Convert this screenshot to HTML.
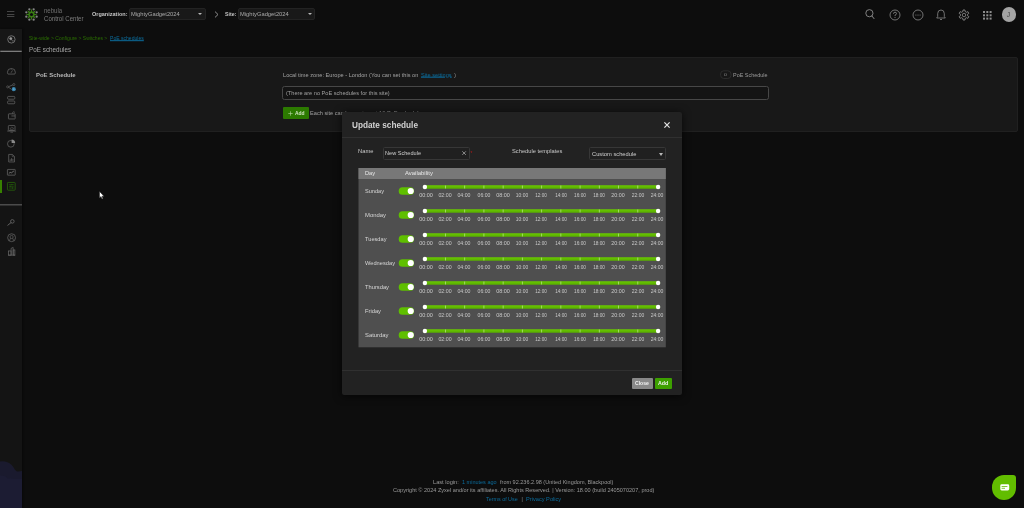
<!DOCTYPE html>
<html>
<head>
<meta charset="utf-8">
<title>Nebula Control Center - PoE schedules</title>
<style>
*{box-sizing:border-box;margin:0;padding:0}
html,body{width:1024px;height:508px;overflow:hidden;background:#0d0d0d;font-family:"Liberation Sans",sans-serif;color:#bdbdbd}
#wrap{position:absolute;left:-8px;top:-8px;width:1040px;height:524px;padding:0;background:#0d0d0d;filter:blur(0.4px)}
#wrap>*{margin-left:8px;margin-top:8px}
.a{position:absolute;white-space:nowrap}
svg{position:absolute;overflow:visible}
#sidebar{left:0;top:29px;width:22px;height:479px;background:#141414;box-shadow:1px 0 2px rgba(0,0,0,.4)}
#panel{left:29px;top:57px;width:989px;height:75px;background:#181818;border:1px solid #202020;border-radius:2px}
#modal{left:342px;top:112px;width:340px;height:283px;background:#222222;border-radius:2px;box-shadow:0 1px 8px rgba(0,0,0,.7)}
.sel{background:#191919;border:1px solid #232323;border-radius:2px}
.tri{width:0;height:0;border-left:2.2px solid transparent;border-right:2.2px solid transparent;border-top:2.6px solid #b8b8b8}
.tog{width:15px;height:7.6px;border-radius:3.8px;background:#5fbf00}
.tog i{position:absolute;right:0.7px;top:0.7px;width:6.2px;height:6.2px;border-radius:3.1px;background:#fff}
.trk{height:3px;border-radius:1.5px;background:#62c000}
.hd{width:5px;height:5px;border-radius:50%;background:#fff}
.tk{width:1px;height:3px;background:#a5da66}
</style>
</head>
<body>
<div id="wrap">
<svg width="0" height="0" style="left:0;top:0"><defs><linearGradient id="tg" x1="0" y1="0" x2="0" y2="1"><stop offset="0" stop-color="#69c900"/><stop offset="1" stop-color="#59ad00"/></linearGradient></defs></svg>
<!-- topbar -->
<svg style="left:7.4px;top:10.8px" width="7.4" height="1" viewBox="0 0 7.4 1"><rect width="7.4" height="0.8" y="0.1" fill="#555"/></svg>
<svg style="left:7.4px;top:13.5px" width="7.4" height="1" viewBox="0 0 7.4 1"><rect width="7.4" height="0.8" y="0.1" fill="#555"/></svg>
<svg style="left:7.4px;top:16.2px" width="7.4" height="1" viewBox="0 0 7.4 1"><rect width="7.4" height="0.8" y="0.1" fill="#555"/></svg>
<svg style="left:23.6px;top:7px" width="15" height="15" viewBox="-7.5 -7.5 15 15"><circle cx="5.17" cy="2.14" r="1.15" fill="#858585"/><circle cx="2.14" cy="5.17" r="1.15" fill="#858585"/><circle cx="-2.14" cy="5.17" r="1.15" fill="#858585"/><circle cx="-5.17" cy="2.14" r="1.15" fill="#858585"/><circle cx="-5.17" cy="-2.14" r="1.15" fill="#858585"/><circle cx="-2.14" cy="-5.17" r="1.15" fill="#858585"/><circle cx="2.14" cy="-5.17" r="1.15" fill="#858585"/><circle cx="5.17" cy="-2.14" r="1.15" fill="#858585"/><polygon points="6.10,0.00 2.59,1.07 4.31,4.31 1.07,2.59 0.00,6.10 -1.07,2.59 -4.31,4.31 -2.59,1.07 -6.10,0.00 -2.59,-1.07 -4.31,-4.31 -1.07,-2.59 -0.00,-6.10 1.07,-2.59 4.31,-4.31 2.59,-1.07" fill="#3a7d14"/><circle cx="0" cy="0" r="1.6" fill="#0d0d0d"/></svg>
<div class="a " style="left:44px;top:6.00px;font-size:6.6px;line-height:7.92px;color:#6f6f6f;font-weight:normal;transform:translateY(0.54px) scaleX(0.919);transform-origin:0 50%;">nebula</div>
<div class="a " style="left:44px;top:14.00px;font-size:6.4px;line-height:7.68px;color:#7d7d7d;font-weight:normal;transform:translateY(0.66px) scaleX(0.950);transform-origin:0 50%;">Control Center</div>
<div class="a " style="left:91.5px;top:10.00px;font-size:5.4px;line-height:6.48px;color:#c4c4c4;font-weight:bold;transform:translateY(0.96px) scaleX(1.022);transform-origin:0 50%;">Organization:</div>
<div class="a sel" style="left:129px;top:8px;width:77px;height:12.3px"></div>
<div class="a " style="left:131px;top:11.00px;font-size:5.2px;line-height:6.24px;color:#aaaaaa;font-weight:normal;transform:translateY(0.08px) scaleX(1.111);transform-origin:0 50%;">MightyGadget2024</div>
<div class="a tri" style="left:198px;top:13.2px"></div>
<svg style="left:213.5px;top:11px" width="5" height="7" viewBox="0 0 5 7"><path d="M1 0.6 L4 3.5 L1 6.4" fill="none" stroke="#9a9a9a" stroke-width="0.9"/></svg>
<div class="a " style="left:225.1px;top:10.00px;font-size:5.4px;line-height:6.48px;color:#c4c4c4;font-weight:bold;transform:translateY(0.96px) scaleX(0.967);transform-origin:0 50%;">Site:</div>
<div class="a sel" style="left:238px;top:8px;width:77.3px;height:12.3px"></div>
<div class="a " style="left:240.3px;top:11.00px;font-size:5.2px;line-height:6.24px;color:#aaaaaa;font-weight:normal;transform:translateY(0.08px) scaleX(1.111);transform-origin:0 50%;">MightyGadget2024</div>
<div class="a tri" style="left:308px;top:13.2px"></div>
<svg style="left:864px;top:8px" width="12" height="12" viewBox="0 0 12 12"><circle cx="5.4" cy="5.2" r="3.6" fill="none" stroke="#8c8c8c" stroke-width="0.9"/><path d="M7.9 8 L10 10.6" stroke="#8c8c8c" stroke-width="1" stroke-linecap="round"/></svg>
<svg style="left:888.6px;top:8.8px" width="12" height="12" viewBox="0 0 12 12"><circle cx="6" cy="6" r="5" fill="none" stroke="#8c8c8c" stroke-width="0.8"/><path d="M4.5 4.8 Q4.5 3.2 6 3.2 Q7.5 3.2 7.5 4.6 Q7.5 5.6 6 6.2 L6 7.1" fill="none" stroke="#8c8c8c" stroke-width="0.8"/><circle cx="6" cy="8.5" r="0.5" fill="#8c8c8c"/></svg>
<svg style="left:911.8px;top:8.8px" width="12" height="12" viewBox="0 0 12 12"><circle cx="6" cy="6" r="5" fill="none" stroke="#8c8c8c" stroke-width="0.8"/><circle cx="3.9" cy="6" r="0.55" fill="#8c8c8c"/><circle cx="6" cy="6" r="0.55" fill="#8c8c8c"/><circle cx="8.1" cy="6" r="0.55" fill="#8c8c8c"/></svg>
<svg style="left:934.9px;top:8.9px" width="12" height="12" viewBox="0 0 12 12"><path d="M1.7 9 L2.7 7.5 L2.7 4.6 Q2.7 1 6 1 Q9.3 1 9.3 4.6 L9.3 7.5 L10.3 9 Z" fill="none" stroke="#8c8c8c" stroke-width="0.8" stroke-linejoin="round"/><path d="M5 10.2 Q6 11.4 7 10.2" fill="none" stroke="#8c8c8c" stroke-width="0.8"/></svg>
<svg style="left:958.2px;top:8.9px" width="12" height="12" viewBox="-6 -6 12 12"><polygon points="-1.08,-3.54 -0.97,-5.01 0.97,-5.01 1.08,-3.54 2.52,-2.71 3.85,-3.35 4.82,-1.66 3.61,-0.83 3.61,0.83 4.82,1.66 3.85,3.35 2.52,2.71 1.08,3.54 0.97,5.01 -0.97,5.01 -1.08,3.54 -2.52,2.71 -3.85,3.35 -4.82,1.66 -3.61,0.83 -3.61,-0.83 -4.82,-1.66 -3.85,-3.35 -2.52,-2.71" fill="none" stroke="#8c8c8c" stroke-width="0.85" stroke-linejoin="round"/><circle r="1.75" fill="none" stroke="#8c8c8c" stroke-width="0.8"/></svg>
<svg style="left:982.8px;top:10.7px" width="9" height="9" viewBox="0 0 9 9"><rect x="0.0" y="0.0" width="2" height="2" fill="#8c8c8c"/><rect x="3.3" y="0.0" width="2" height="2" fill="#8c8c8c"/><rect x="6.6" y="0.0" width="2" height="2" fill="#8c8c8c"/><rect x="0.0" y="3.3" width="2" height="2" fill="#8c8c8c"/><rect x="3.3" y="3.3" width="2" height="2" fill="#8c8c8c"/><rect x="6.6" y="3.3" width="2" height="2" fill="#8c8c8c"/><rect x="0.0" y="6.6" width="2" height="2" fill="#8c8c8c"/><rect x="3.3" y="6.6" width="2" height="2" fill="#8c8c8c"/><rect x="6.6" y="6.6" width="2" height="2" fill="#8c8c8c"/></svg>
<div class="a" style="left:1001.6px;top:7.4px;width:14px;height:14.2px;border-radius:50%;background:#a4a4a4"></div>
<div class="a" style="left:1001.5px;top:7.5px;width:14px;height:14px;line-height:14.2px;text-align:center;font-size:6.6px;color:#444">J</div>
<!-- sidebar -->
<div class="a" id="sidebar"></div>
<div class="a" style="left:0;top:29px;width:22px;height:22px;background:#171717"></div>
<svg style="left:6.70px;top:35.10px" width="8.8" height="8.8" viewBox="0 0 10 10"><circle cx="5" cy="5" r="4.2" fill="none" stroke="#828282" stroke-width="0.9"/><circle cx="4.3" cy="4.1" r="1.35" fill="#9a9a9a" stroke="#a8a8a8" stroke-width="0.5"/><path d="M5.2 5.2 L6.7 7.2 L7.6 6.2" fill="none" stroke="#8a8a8a" stroke-width="0.7"/></svg>
<svg style="left:0;top:50px" width="22" height="3" viewBox="0 0 22 3"><rect x="0.3" y="0.7" width="21.4" height="1.3" fill="#7c7c7c"/></svg>
<svg style="left:7.05px;top:68.30px" width="8.8" height="6.6" viewBox="0 0 10 7.5"><path d="M1.1 6.9 Q0.5 5.8 0.5 4.8 Q0.5 0.6 5 0.6 Q9.5 0.6 9.5 4.8 Q9.5 5.8 8.9 6.9 Z" fill="none" stroke="#686868" stroke-width="0.85" stroke-linejoin="round"/><path d="M4.6 5.4 L6.2 2.8 M5 0.8 L5 1.8" stroke="#686868" stroke-width="0.8"/></svg>
<svg style="left:6.40px;top:83.40px" width="9.6" height="8.8" viewBox="0 0 11 10"><path d="M2.4 4.4 L8.6 1.8 M2.6 4.6 L6 7" stroke="#686868" stroke-width="0.8"/><circle cx="1.9" cy="4.4" r="1.2" fill="#151515" stroke="#686868" stroke-width="0.7"/><circle cx="9" cy="1.7" r="1.2" fill="#151515" stroke="#686868" stroke-width="0.7"/><circle cx="8.9" cy="7.0" r="2.35" fill="#3b82aa"/><circle cx="8.9" cy="7.0" r="0.9" fill="#5aa6d0"/></svg>
<svg style="left:7.25px;top:96.40px" width="8.4" height="8.2" viewBox="0 0 10 10"><rect x="0.6" y="0.5" width="8.8" height="3.4" rx="1.1" fill="none" stroke="#686868" stroke-width="0.9"/><rect x="0.6" y="6.1" width="8.8" height="3.4" rx="1.1" fill="none" stroke="#686868" stroke-width="0.9"/></svg>
<svg style="left:7.55px;top:110.70px" width="7.6" height="8.4" viewBox="0 0 9 10"><rect x="0.5" y="3.4" width="8" height="6.1" rx="0.5" fill="none" stroke="#686868" stroke-width="0.9"/><path d="M4 5.9 L8.4 5.9" stroke="#686868" stroke-width="0.9"/><path d="M5.6 3.4 L5.6 1.6 Q7 -0.2 8.2 1.8" fill="none" stroke="#686868" stroke-width="0.8"/></svg>
<svg style="left:6.55px;top:125.30px" width="9.4" height="7.8" viewBox="0 0 11 9"><rect x="1.6" y="0.5" width="7.8" height="5.8" rx="0.9" fill="none" stroke="#686868" stroke-width="0.85"/><path d="M0.3 7 L10.7 7" stroke="#686868" stroke-width="0.9"/><path d="M3.8 5 Q3.2 3.8 4.4 3.4 Q5 2.2 6.3 2.9 Q7.6 2.9 7.4 4.1 Q7.8 5 6.9 5 Z" fill="none" stroke="#686868" stroke-width="0.6"/><path d="M4 8.4 L7 8.4" stroke="#686868" stroke-width="0.7"/></svg>
<svg style="left:7.00px;top:139.10px" width="8.4" height="8.6" viewBox="0 0 10 10.2"><circle cx="4.6" cy="5.7" r="4" fill="none" stroke="#686868" stroke-width="0.85"/><path d="M5.5 0.6 A4.2 4.2 0 0 1 9.7 4.8 L5.5 4.8 Z" fill="#8a8a8a"/></svg>
<svg style="left:7.70px;top:153.80px" width="7.2" height="8.4" viewBox="0 0 8.5 10"><path d="M0.8 0.5 L5.2 0.5 L7.7 3 L7.7 9.5 L0.8 9.5 Z" fill="none" stroke="#686868" stroke-width="0.85" stroke-linejoin="round"/><path d="M5 0.7 L5 3.2 L7.5 3.2" fill="none" stroke="#686868" stroke-width="0.6"/><path d="M2.6 8.2 L2.6 6.4 M4.2 8.2 L4.2 5 M5.8 8.2 L5.8 5.8" stroke="#686868" stroke-width="0.9"/></svg>
<svg style="left:7.05px;top:169.30px" width="8.6" height="6.6" viewBox="0 0 10.5 8"><rect x="0.5" y="0.5" width="9.5" height="7" rx="0.4" fill="none" stroke="#686868" stroke-width="0.9"/><path d="M2.2 5.6 L3.8 4 L5.2 4.8 L8.4 2.4" fill="none" stroke="#9a9a9a" stroke-width="0.8"/></svg>
<div class="a" style="left:0;top:180.1px;width:1.9px;height:13.1px;background:#378200"></div>
<svg style="left:7.05px;top:182.20px" width="8.6" height="8.6" viewBox="0 0 10 10"><rect x="0.5" y="0.5" width="9" height="9" rx="0.8" fill="none" stroke="#27650a" stroke-width="0.95"/><path d="M2.2 3 L7.8 3 M2.2 5 L7.8 5 M2.2 7 L7.8 7" stroke="#27650a" stroke-width="0.7"/><path d="M5.6 2.2 L5.6 3.8 M3.8 4.2 L3.8 5.8 M6.4 6.2 L6.4 7.8" stroke="#27650a" stroke-width="0.8"/></svg>
<svg style="left:0;top:203px" width="22" height="3" viewBox="0 0 22 3"><rect x="0" y="1.2" width="22" height="1.2" fill="#5a5a5a"/></svg>
<svg style="left:7.40px;top:219.40px" width="7.8" height="6.8" viewBox="0 0 9 8"><circle cx="6.2" cy="2.8" r="2.1" fill="none" stroke="#686868" stroke-width="0.95"/><path d="M4.6 4.3 L0.9 7.3" stroke="#686868" stroke-width="1.1" stroke-linecap="round"/></svg>
<svg style="left:6.80px;top:232.70px" width="9.2" height="9.4" viewBox="0 0 10 10.2"><circle cx="5" cy="5.1" r="4.3" fill="none" stroke="#686868" stroke-width="0.8"/><circle cx="5" cy="4.3" r="1.7" fill="none" stroke="#686868" stroke-width="0.7"/><path d="M3.9 5.6 L2.6 8.4 M6.1 5.6 L7.4 8.4" stroke="#686868" stroke-width="0.7"/></svg>
<svg style="left:7.50px;top:247.20px" width="7.4" height="8.6" viewBox="0 0 8.6 10"><path d="M3.6 9.5 L3.6 1.6 L6 0.5 L6 9.5" fill="none" stroke="#686868" stroke-width="0.85"/><rect x="0.6" y="4.6" width="3" height="4.9" fill="none" stroke="#686868" stroke-width="0.85"/><rect x="6" y="3.4" width="2" height="6.1" fill="none" stroke="#686868" stroke-width="0.85"/><path d="M0.3 9.5 L8.3 9.5" stroke="#686868" stroke-width="0.8"/></svg>
<svg style="left:0;top:458px" width="22" height="50" viewBox="0 0 22 50"><path d="M0 3.6 Q9 2 14 10 Q15.6 13.6 18 13.4 L22 13 L22 50 L0 50 Z" fill="#1a1a2e"/><path d="M0 17.5 Q5 17 8 20.5 Q12 20 14 21 L22 21 L22 50 L0 50 Z" fill="#1c1c33"/></svg>
<!-- main -->
<div class="a " style="left:29px;top:36.00px;font-size:4.7px;line-height:5.64px;color:#2a6e00;font-weight:normal;transform:translateY(0.18px) scaleX(1.071);transform-origin:0 50%;">Site-wide &gt; Configure &gt; Switches &gt;</div>
<div class="a " style="left:110px;top:36.00px;font-size:4.7px;line-height:5.64px;color:#0b6c9c;font-weight:normal;text-decoration:underline;text-decoration-thickness:0.5px;text-underline-offset:0.4px;transform:translateY(0.18px) scaleX(1.081);transform-origin:0 50%;">PoE schedules</div>
<div class="a " style="left:29px;top:45.00px;font-size:6.4px;line-height:7.68px;color:#a6a6a6;font-weight:normal;transform:translateY(0.86px) scaleX(0.990);transform-origin:0 50%;">PoE schedules</div>
<div class="a" id="panel"></div>
<div class="a " style="left:35.7px;top:71.00px;font-size:5.7px;line-height:6.84px;color:#b8b8b8;font-weight:bold;transform:translateY(0.78px) scaleX(1.046);transform-origin:0 50%;">PoE Schedule</div>
<div class="a " style="left:282.8px;top:72.00px;font-size:4.7px;line-height:5.64px;color:#a4a4a4;font-weight:normal;transform:translateY(0.68px) scaleX(1.201);transform-origin:0 50%;">Local time zone: Europe - London (You can set this on</div>
<div class="a " style="left:421px;top:72.00px;font-size:4.7px;line-height:5.64px;color:#0b6c9c;font-weight:normal;text-decoration:underline;text-decoration-thickness:0.5px;text-underline-offset:0.4px;transform:translateY(0.68px) scaleX(1.202);transform-origin:0 50%;">Site settings</div>
<div class="a " style="left:454.3px;top:72.00px;font-size:4.7px;line-height:5.64px;color:#a4a4a4;font-weight:normal;transform:translateY(0.68px) scaleX(1.000);transform-origin:0 50%;">)</div>
<div class="a" style="left:282px;top:86px;width:486.6px;height:14px;border:1px solid #474747;border-radius:2.5px;background:#141414"></div>
<div class="a " style="left:285.7px;top:90.00px;font-size:4.7px;line-height:5.64px;color:#a0a0a0;font-weight:normal;transform:translateY(0.58px) scaleX(1.198);transform-origin:0 50%;">(There are no PoE schedules for this site)</div>
<div class="a" style="left:282.7px;top:107px;width:26px;height:12px;background:#2c7a00;border-radius:1px"></div>
<svg style="left:287.5px;top:110.5px" width="5" height="5" viewBox="0 0 5 5"><path d="M2.5 0.3 L2.5 4.7 M0.3 2.5 L4.7 2.5" stroke="#b9d6a4" stroke-width="0.6"/></svg>
<div class="a " style="left:295.2px;top:110.00px;font-size:5px;line-height:6.00px;color:#cfe3c0;font-weight:bold;transform:translateY(0.10px) scaleX(0.986);transform-origin:0 50%;">Add</div>
<div class="a " style="left:310.2px;top:111.00px;font-size:4.7px;line-height:5.64px;color:#a0a0a0;font-weight:normal;transform:translateY(0.18px) scaleX(1.200);transform-origin:0 50%;">Each site can have at most 10 PoE schedules</div>
<svg style="left:719px;top:69px" width="14" height="11" viewBox="719 69 14 11"><rect x="720.6" y="70.8" width="10.4" height="7.7" rx="3.2" fill="#171717" stroke="#2c2c2c" stroke-width="1"/></svg>
<div class="a " style="left:724.4px;top:72.00px;font-size:4.4px;line-height:5.28px;color:#8c8c8c;font-weight:normal;transform:translateY(0.26px) scaleX(1.150);transform-origin:0 50%;">0</div>
<div class="a " style="left:733.3px;top:72.00px;font-size:4.7px;line-height:5.64px;color:#9a9a9a;font-weight:normal;transform:translateY(0.98px) scaleX(1.161);transform-origin:0 50%;">PoE Schedule</div>
<svg style="left:98.5px;top:191px" width="6" height="9" viewBox="0 0 6 9"><path d="M0.5 0.4 L0.5 7 L2 5.6 L3 8 L4 7.6 L3 5.2 L5 5.2 Z" fill="#fff" stroke="#222" stroke-width="0.5"/></svg>
<!-- modal -->
<div class="a" id="modal"></div>
<div class="a " style="left:351.8px;top:120.00px;font-size:8.2px;line-height:9.84px;color:#d2d2d2;font-weight:bold;transform:translateY(0.88px) scaleX(1.007);transform-origin:0 50%;">Update schedule</div>
<svg style="left:664.3px;top:121.8px" width="6" height="6" viewBox="0 0 6 6"><path d="M0.4 0.4 L5.6 5.6 M5.6 0.4 L0.4 5.6" stroke="#e6e6e6" stroke-width="1.2"/></svg>
<div class="a" style="left:342px;top:137px;width:340px;height:1px;background:#303030"></div>
<div class="a" style="left:342px;top:370px;width:340px;height:1px;background:#303030"></div>
<div class="a " style="left:358.2px;top:148.00px;font-size:5.1px;line-height:6.12px;color:#cacaca;font-weight:normal;transform:translateY(0.24px) scaleX(1.133);transform-origin:0 50%;">Name</div>
<div class="a" style="left:383.3px;top:147.3px;width:86.6px;height:12.3px;border:1px solid #373737;border-radius:1.5px;background:#202020"></div>
<div class="a " style="left:385px;top:150.00px;font-size:5px;line-height:6.00px;color:#d0d0d0;font-weight:normal;transform:translateY(0.40px) scaleX(1.116);transform-origin:0 50%;">New Schedule</div>
<svg style="left:462px;top:151.4px" width="4.2" height="4.2" viewBox="0 0 4 4"><path d="M0.3 0.3 L3.7 3.7 M3.7 0.3 L0.3 3.7" stroke="#c8c8c8" stroke-width="0.6"/></svg>
<div class="a " style="left:470.6px;top:150.00px;font-size:4.5px;line-height:5.40px;color:#c01818;font-weight:normal;transform:translateY(0.50px) scaleX(1.000);transform-origin:0 50%;">*</div>
<div class="a " style="left:512px;top:148.00px;font-size:5.1px;line-height:6.12px;color:#cacaca;font-weight:normal;transform:translateY(0.24px) scaleX(1.126);transform-origin:0 50%;">Schedule templates</div>
<div class="a" style="left:589px;top:147.3px;width:77px;height:12.3px;border:1px solid #373737;border-radius:1.5px;background:#202020"></div>
<div class="a " style="left:592.3px;top:150.00px;font-size:5px;line-height:6.00px;color:#d0d0d0;font-weight:normal;transform:translateY(0.70px) scaleX(1.149);transform-origin:0 50%;">Custom schedule</div>
<div class="a tri" style="left:659.3px;top:152.5px;border-left-width:2.5px;border-right-width:2.5px;border-top-width:3px"></div>
<svg style="left:358px;top:168px" width="309" height="180" viewBox="358 168 309 180"><rect x="358.5" y="168" width="307.3" height="179.3" fill="#4f4f4f"/><rect x="358.5" y="168" width="307.3" height="11" fill="#787878"/></svg>
<div class="a " style="left:365px;top:171.00px;font-size:4.9px;line-height:5.88px;color:#e8e8e8;font-weight:normal;transform:translateY(0.36px) scaleX(1.161);transform-origin:0 50%;">Day</div>
<div class="a " style="left:405.3px;top:171.00px;font-size:4.9px;line-height:5.88px;color:#e8e8e8;font-weight:normal;transform:translateY(0.36px) scaleX(1.212);transform-origin:0 50%;">Availability</div>
<div class="a " style="left:365px;top:189.00px;font-size:4.9px;line-height:5.88px;color:#d6d6d6;font-weight:normal;transform:translateY(0.26px) scaleX(1.145);transform-origin:0 50%;">Sunday</div>
<svg style="left:398px;top:187.30px" width="17" height="8" viewBox="0 0 17 8"><rect x="0.7" y="0.15" width="15.4" height="7.7" rx="3.85" fill="#5fbf00"/><circle cx="12.75" cy="4" r="3.1" fill="#fff"/></svg>
<svg style="left:420px;top:183.35px" width="244" height="8" viewBox="420 -4 244 8"><rect x="422.80" y="-1.7" width="237.40" height="3.4" rx="1.7" fill="url(#tg)"/><rect x="444.99" y="-1.5" width="0.9" height="3" fill="#a9dc70"/><rect x="464.22" y="-1.5" width="0.9" height="3" fill="#a9dc70"/><rect x="483.45" y="-1.5" width="0.9" height="3" fill="#a9dc70"/><rect x="502.69" y="-1.5" width="0.9" height="3" fill="#a9dc70"/><rect x="521.92" y="-1.5" width="0.9" height="3" fill="#a9dc70"/><rect x="541.16" y="-1.5" width="0.9" height="3" fill="#a9dc70"/><rect x="560.39" y="-1.5" width="0.9" height="3" fill="#a9dc70"/><rect x="579.63" y="-1.5" width="0.9" height="3" fill="#a9dc70"/><rect x="598.87" y="-1.5" width="0.9" height="3" fill="#a9dc70"/><rect x="618.10" y="-1.5" width="0.9" height="3" fill="#a9dc70"/><rect x="637.33" y="-1.5" width="0.9" height="3" fill="#a9dc70"/><circle cx="424.9" cy="0" r="2.2" fill="#fff"/><circle cx="658.1" cy="0" r="2.2" fill="#fff"/></svg>
<div class="a" style="left:415.95px;top:193px;width:20px;text-align:center;font-size:4.5px;line-height:5.4px;color:#c8c8c8;transform:translateY(0.00px) scaleX(1.217)">00:00</div>
<div class="a" style="left:435.19px;top:193px;width:20px;text-align:center;font-size:4.5px;line-height:5.4px;color:#c8c8c8;transform:translateY(0.00px) scaleX(1.163)">02:00</div>
<div class="a" style="left:454.42px;top:193px;width:20px;text-align:center;font-size:4.5px;line-height:5.4px;color:#c8c8c8;transform:translateY(0.00px) scaleX(1.159)">04:00</div>
<div class="a" style="left:473.65px;top:193px;width:20px;text-align:center;font-size:4.5px;line-height:5.4px;color:#c8c8c8;transform:translateY(0.00px) scaleX(1.137)">06:00</div>
<div class="a" style="left:492.89px;top:193px;width:20px;text-align:center;font-size:4.5px;line-height:5.4px;color:#c8c8c8;transform:translateY(0.00px) scaleX(1.217)">08:00</div>
<div class="a" style="left:512.12px;top:193px;width:20px;text-align:center;font-size:4.5px;line-height:5.4px;color:#c8c8c8;transform:translateY(0.00px) scaleX(1.092)">10:00</div>
<div class="a" style="left:531.36px;top:193px;width:20px;text-align:center;font-size:4.5px;line-height:5.4px;color:#c8c8c8;transform:translateY(0.00px) scaleX(1.021)">12:00</div>
<div class="a" style="left:550.60px;top:193px;width:20px;text-align:center;font-size:4.5px;line-height:5.4px;color:#c8c8c8;transform:translateY(0.00px) scaleX(1.039)">14:00</div>
<div class="a" style="left:569.83px;top:193px;width:20px;text-align:center;font-size:4.5px;line-height:5.4px;color:#c8c8c8;transform:translateY(0.00px) scaleX(1.057)">16:00</div>
<div class="a" style="left:589.07px;top:193px;width:20px;text-align:center;font-size:4.5px;line-height:5.4px;color:#c8c8c8;transform:translateY(0.00px) scaleX(1.039)">18:00</div>
<div class="a" style="left:608.30px;top:193px;width:20px;text-align:center;font-size:4.5px;line-height:5.4px;color:#c8c8c8;transform:translateY(0.00px) scaleX(1.181)">20:00</div>
<div class="a" style="left:627.53px;top:193px;width:20px;text-align:center;font-size:4.5px;line-height:5.4px;color:#c8c8c8;transform:translateY(0.00px) scaleX(1.110)">22:00</div>
<div class="a" style="left:646.77px;top:193px;width:20px;text-align:center;font-size:4.5px;line-height:5.4px;color:#c8c8c8;transform:translateY(0.00px) scaleX(1.128)">24:00</div>
<div class="a " style="left:365px;top:213.00px;font-size:4.9px;line-height:5.88px;color:#d6d6d6;font-weight:normal;transform:translateY(0.26px) scaleX(1.206);transform-origin:0 50%;">Monday</div>
<svg style="left:398px;top:211.30px" width="17" height="8" viewBox="0 0 17 8"><rect x="0.7" y="0.15" width="15.4" height="7.7" rx="3.85" fill="#5fbf00"/><circle cx="12.75" cy="4" r="3.1" fill="#fff"/></svg>
<svg style="left:420px;top:207.35px" width="244" height="8" viewBox="420 -4 244 8"><rect x="422.80" y="-1.7" width="237.40" height="3.4" rx="1.7" fill="url(#tg)"/><rect x="444.99" y="-1.5" width="0.9" height="3" fill="#a9dc70"/><rect x="464.22" y="-1.5" width="0.9" height="3" fill="#a9dc70"/><rect x="483.45" y="-1.5" width="0.9" height="3" fill="#a9dc70"/><rect x="502.69" y="-1.5" width="0.9" height="3" fill="#a9dc70"/><rect x="521.92" y="-1.5" width="0.9" height="3" fill="#a9dc70"/><rect x="541.16" y="-1.5" width="0.9" height="3" fill="#a9dc70"/><rect x="560.39" y="-1.5" width="0.9" height="3" fill="#a9dc70"/><rect x="579.63" y="-1.5" width="0.9" height="3" fill="#a9dc70"/><rect x="598.87" y="-1.5" width="0.9" height="3" fill="#a9dc70"/><rect x="618.10" y="-1.5" width="0.9" height="3" fill="#a9dc70"/><rect x="637.33" y="-1.5" width="0.9" height="3" fill="#a9dc70"/><circle cx="424.9" cy="0" r="2.2" fill="#fff"/><circle cx="658.1" cy="0" r="2.2" fill="#fff"/></svg>
<div class="a" style="left:415.95px;top:217px;width:20px;text-align:center;font-size:4.5px;line-height:5.4px;color:#c8c8c8;transform:translateY(0.00px) scaleX(1.217)">00:00</div>
<div class="a" style="left:435.19px;top:217px;width:20px;text-align:center;font-size:4.5px;line-height:5.4px;color:#c8c8c8;transform:translateY(0.00px) scaleX(1.163)">02:00</div>
<div class="a" style="left:454.42px;top:217px;width:20px;text-align:center;font-size:4.5px;line-height:5.4px;color:#c8c8c8;transform:translateY(0.00px) scaleX(1.159)">04:00</div>
<div class="a" style="left:473.65px;top:217px;width:20px;text-align:center;font-size:4.5px;line-height:5.4px;color:#c8c8c8;transform:translateY(0.00px) scaleX(1.137)">06:00</div>
<div class="a" style="left:492.89px;top:217px;width:20px;text-align:center;font-size:4.5px;line-height:5.4px;color:#c8c8c8;transform:translateY(0.00px) scaleX(1.217)">08:00</div>
<div class="a" style="left:512.12px;top:217px;width:20px;text-align:center;font-size:4.5px;line-height:5.4px;color:#c8c8c8;transform:translateY(0.00px) scaleX(1.092)">10:00</div>
<div class="a" style="left:531.36px;top:217px;width:20px;text-align:center;font-size:4.5px;line-height:5.4px;color:#c8c8c8;transform:translateY(0.00px) scaleX(1.021)">12:00</div>
<div class="a" style="left:550.60px;top:217px;width:20px;text-align:center;font-size:4.5px;line-height:5.4px;color:#c8c8c8;transform:translateY(0.00px) scaleX(1.039)">14:00</div>
<div class="a" style="left:569.83px;top:217px;width:20px;text-align:center;font-size:4.5px;line-height:5.4px;color:#c8c8c8;transform:translateY(0.00px) scaleX(1.057)">16:00</div>
<div class="a" style="left:589.07px;top:217px;width:20px;text-align:center;font-size:4.5px;line-height:5.4px;color:#c8c8c8;transform:translateY(0.00px) scaleX(1.039)">18:00</div>
<div class="a" style="left:608.30px;top:217px;width:20px;text-align:center;font-size:4.5px;line-height:5.4px;color:#c8c8c8;transform:translateY(0.00px) scaleX(1.181)">20:00</div>
<div class="a" style="left:627.53px;top:217px;width:20px;text-align:center;font-size:4.5px;line-height:5.4px;color:#c8c8c8;transform:translateY(0.00px) scaleX(1.110)">22:00</div>
<div class="a" style="left:646.77px;top:217px;width:20px;text-align:center;font-size:4.5px;line-height:5.4px;color:#c8c8c8;transform:translateY(0.00px) scaleX(1.128)">24:00</div>
<div class="a " style="left:365px;top:237.00px;font-size:4.9px;line-height:5.88px;color:#d6d6d6;font-weight:normal;transform:translateY(0.26px) scaleX(1.157);transform-origin:0 50%;">Tuesday</div>
<svg style="left:398px;top:235.30px" width="17" height="8" viewBox="0 0 17 8"><rect x="0.7" y="0.15" width="15.4" height="7.7" rx="3.85" fill="#5fbf00"/><circle cx="12.75" cy="4" r="3.1" fill="#fff"/></svg>
<svg style="left:420px;top:231.35px" width="244" height="8" viewBox="420 -4 244 8"><rect x="422.80" y="-1.7" width="237.40" height="3.4" rx="1.7" fill="url(#tg)"/><rect x="444.99" y="-1.5" width="0.9" height="3" fill="#a9dc70"/><rect x="464.22" y="-1.5" width="0.9" height="3" fill="#a9dc70"/><rect x="483.45" y="-1.5" width="0.9" height="3" fill="#a9dc70"/><rect x="502.69" y="-1.5" width="0.9" height="3" fill="#a9dc70"/><rect x="521.92" y="-1.5" width="0.9" height="3" fill="#a9dc70"/><rect x="541.16" y="-1.5" width="0.9" height="3" fill="#a9dc70"/><rect x="560.39" y="-1.5" width="0.9" height="3" fill="#a9dc70"/><rect x="579.63" y="-1.5" width="0.9" height="3" fill="#a9dc70"/><rect x="598.87" y="-1.5" width="0.9" height="3" fill="#a9dc70"/><rect x="618.10" y="-1.5" width="0.9" height="3" fill="#a9dc70"/><rect x="637.33" y="-1.5" width="0.9" height="3" fill="#a9dc70"/><circle cx="424.9" cy="0" r="2.2" fill="#fff"/><circle cx="658.1" cy="0" r="2.2" fill="#fff"/></svg>
<div class="a" style="left:415.95px;top:241px;width:20px;text-align:center;font-size:4.5px;line-height:5.4px;color:#c8c8c8;transform:translateY(0.00px) scaleX(1.217)">00:00</div>
<div class="a" style="left:435.19px;top:241px;width:20px;text-align:center;font-size:4.5px;line-height:5.4px;color:#c8c8c8;transform:translateY(0.00px) scaleX(1.163)">02:00</div>
<div class="a" style="left:454.42px;top:241px;width:20px;text-align:center;font-size:4.5px;line-height:5.4px;color:#c8c8c8;transform:translateY(0.00px) scaleX(1.159)">04:00</div>
<div class="a" style="left:473.65px;top:241px;width:20px;text-align:center;font-size:4.5px;line-height:5.4px;color:#c8c8c8;transform:translateY(0.00px) scaleX(1.137)">06:00</div>
<div class="a" style="left:492.89px;top:241px;width:20px;text-align:center;font-size:4.5px;line-height:5.4px;color:#c8c8c8;transform:translateY(0.00px) scaleX(1.217)">08:00</div>
<div class="a" style="left:512.12px;top:241px;width:20px;text-align:center;font-size:4.5px;line-height:5.4px;color:#c8c8c8;transform:translateY(0.00px) scaleX(1.092)">10:00</div>
<div class="a" style="left:531.36px;top:241px;width:20px;text-align:center;font-size:4.5px;line-height:5.4px;color:#c8c8c8;transform:translateY(0.00px) scaleX(1.021)">12:00</div>
<div class="a" style="left:550.60px;top:241px;width:20px;text-align:center;font-size:4.5px;line-height:5.4px;color:#c8c8c8;transform:translateY(0.00px) scaleX(1.039)">14:00</div>
<div class="a" style="left:569.83px;top:241px;width:20px;text-align:center;font-size:4.5px;line-height:5.4px;color:#c8c8c8;transform:translateY(0.00px) scaleX(1.057)">16:00</div>
<div class="a" style="left:589.07px;top:241px;width:20px;text-align:center;font-size:4.5px;line-height:5.4px;color:#c8c8c8;transform:translateY(0.00px) scaleX(1.039)">18:00</div>
<div class="a" style="left:608.30px;top:241px;width:20px;text-align:center;font-size:4.5px;line-height:5.4px;color:#c8c8c8;transform:translateY(0.00px) scaleX(1.181)">20:00</div>
<div class="a" style="left:627.53px;top:241px;width:20px;text-align:center;font-size:4.5px;line-height:5.4px;color:#c8c8c8;transform:translateY(0.00px) scaleX(1.110)">22:00</div>
<div class="a" style="left:646.77px;top:241px;width:20px;text-align:center;font-size:4.5px;line-height:5.4px;color:#c8c8c8;transform:translateY(0.00px) scaleX(1.128)">24:00</div>
<div class="a " style="left:365px;top:261.00px;font-size:4.9px;line-height:5.88px;color:#d6d6d6;font-weight:normal;transform:translateY(0.26px) scaleX(1.165);transform-origin:0 50%;">Wednesday</div>
<svg style="left:398px;top:259.30px" width="17" height="8" viewBox="0 0 17 8"><rect x="0.7" y="0.15" width="15.4" height="7.7" rx="3.85" fill="#5fbf00"/><circle cx="12.75" cy="4" r="3.1" fill="#fff"/></svg>
<svg style="left:420px;top:255.35px" width="244" height="8" viewBox="420 -4 244 8"><rect x="422.80" y="-1.7" width="237.40" height="3.4" rx="1.7" fill="url(#tg)"/><rect x="444.99" y="-1.5" width="0.9" height="3" fill="#a9dc70"/><rect x="464.22" y="-1.5" width="0.9" height="3" fill="#a9dc70"/><rect x="483.45" y="-1.5" width="0.9" height="3" fill="#a9dc70"/><rect x="502.69" y="-1.5" width="0.9" height="3" fill="#a9dc70"/><rect x="521.92" y="-1.5" width="0.9" height="3" fill="#a9dc70"/><rect x="541.16" y="-1.5" width="0.9" height="3" fill="#a9dc70"/><rect x="560.39" y="-1.5" width="0.9" height="3" fill="#a9dc70"/><rect x="579.63" y="-1.5" width="0.9" height="3" fill="#a9dc70"/><rect x="598.87" y="-1.5" width="0.9" height="3" fill="#a9dc70"/><rect x="618.10" y="-1.5" width="0.9" height="3" fill="#a9dc70"/><rect x="637.33" y="-1.5" width="0.9" height="3" fill="#a9dc70"/><circle cx="424.9" cy="0" r="2.2" fill="#fff"/><circle cx="658.1" cy="0" r="2.2" fill="#fff"/></svg>
<div class="a" style="left:415.95px;top:265px;width:20px;text-align:center;font-size:4.5px;line-height:5.4px;color:#c8c8c8;transform:translateY(0.00px) scaleX(1.217)">00:00</div>
<div class="a" style="left:435.19px;top:265px;width:20px;text-align:center;font-size:4.5px;line-height:5.4px;color:#c8c8c8;transform:translateY(0.00px) scaleX(1.163)">02:00</div>
<div class="a" style="left:454.42px;top:265px;width:20px;text-align:center;font-size:4.5px;line-height:5.4px;color:#c8c8c8;transform:translateY(0.00px) scaleX(1.159)">04:00</div>
<div class="a" style="left:473.65px;top:265px;width:20px;text-align:center;font-size:4.5px;line-height:5.4px;color:#c8c8c8;transform:translateY(0.00px) scaleX(1.137)">06:00</div>
<div class="a" style="left:492.89px;top:265px;width:20px;text-align:center;font-size:4.5px;line-height:5.4px;color:#c8c8c8;transform:translateY(0.00px) scaleX(1.217)">08:00</div>
<div class="a" style="left:512.12px;top:265px;width:20px;text-align:center;font-size:4.5px;line-height:5.4px;color:#c8c8c8;transform:translateY(0.00px) scaleX(1.092)">10:00</div>
<div class="a" style="left:531.36px;top:265px;width:20px;text-align:center;font-size:4.5px;line-height:5.4px;color:#c8c8c8;transform:translateY(0.00px) scaleX(1.021)">12:00</div>
<div class="a" style="left:550.60px;top:265px;width:20px;text-align:center;font-size:4.5px;line-height:5.4px;color:#c8c8c8;transform:translateY(0.00px) scaleX(1.039)">14:00</div>
<div class="a" style="left:569.83px;top:265px;width:20px;text-align:center;font-size:4.5px;line-height:5.4px;color:#c8c8c8;transform:translateY(0.00px) scaleX(1.057)">16:00</div>
<div class="a" style="left:589.07px;top:265px;width:20px;text-align:center;font-size:4.5px;line-height:5.4px;color:#c8c8c8;transform:translateY(0.00px) scaleX(1.039)">18:00</div>
<div class="a" style="left:608.30px;top:265px;width:20px;text-align:center;font-size:4.5px;line-height:5.4px;color:#c8c8c8;transform:translateY(0.00px) scaleX(1.181)">20:00</div>
<div class="a" style="left:627.53px;top:265px;width:20px;text-align:center;font-size:4.5px;line-height:5.4px;color:#c8c8c8;transform:translateY(0.00px) scaleX(1.110)">22:00</div>
<div class="a" style="left:646.77px;top:265px;width:20px;text-align:center;font-size:4.5px;line-height:5.4px;color:#c8c8c8;transform:translateY(0.00px) scaleX(1.128)">24:00</div>
<div class="a " style="left:365px;top:285.00px;font-size:4.9px;line-height:5.88px;color:#d6d6d6;font-weight:normal;transform:translateY(0.26px) scaleX(1.177);transform-origin:0 50%;">Thursday</div>
<svg style="left:398px;top:283.30px" width="17" height="8" viewBox="0 0 17 8"><rect x="0.7" y="0.15" width="15.4" height="7.7" rx="3.85" fill="#5fbf00"/><circle cx="12.75" cy="4" r="3.1" fill="#fff"/></svg>
<svg style="left:420px;top:279.35px" width="244" height="8" viewBox="420 -4 244 8"><rect x="422.80" y="-1.7" width="237.40" height="3.4" rx="1.7" fill="url(#tg)"/><rect x="444.99" y="-1.5" width="0.9" height="3" fill="#a9dc70"/><rect x="464.22" y="-1.5" width="0.9" height="3" fill="#a9dc70"/><rect x="483.45" y="-1.5" width="0.9" height="3" fill="#a9dc70"/><rect x="502.69" y="-1.5" width="0.9" height="3" fill="#a9dc70"/><rect x="521.92" y="-1.5" width="0.9" height="3" fill="#a9dc70"/><rect x="541.16" y="-1.5" width="0.9" height="3" fill="#a9dc70"/><rect x="560.39" y="-1.5" width="0.9" height="3" fill="#a9dc70"/><rect x="579.63" y="-1.5" width="0.9" height="3" fill="#a9dc70"/><rect x="598.87" y="-1.5" width="0.9" height="3" fill="#a9dc70"/><rect x="618.10" y="-1.5" width="0.9" height="3" fill="#a9dc70"/><rect x="637.33" y="-1.5" width="0.9" height="3" fill="#a9dc70"/><circle cx="424.9" cy="0" r="2.2" fill="#fff"/><circle cx="658.1" cy="0" r="2.2" fill="#fff"/></svg>
<div class="a" style="left:415.95px;top:289px;width:20px;text-align:center;font-size:4.5px;line-height:5.4px;color:#c8c8c8;transform:translateY(0.00px) scaleX(1.217)">00:00</div>
<div class="a" style="left:435.19px;top:289px;width:20px;text-align:center;font-size:4.5px;line-height:5.4px;color:#c8c8c8;transform:translateY(0.00px) scaleX(1.163)">02:00</div>
<div class="a" style="left:454.42px;top:289px;width:20px;text-align:center;font-size:4.5px;line-height:5.4px;color:#c8c8c8;transform:translateY(0.00px) scaleX(1.159)">04:00</div>
<div class="a" style="left:473.65px;top:289px;width:20px;text-align:center;font-size:4.5px;line-height:5.4px;color:#c8c8c8;transform:translateY(0.00px) scaleX(1.137)">06:00</div>
<div class="a" style="left:492.89px;top:289px;width:20px;text-align:center;font-size:4.5px;line-height:5.4px;color:#c8c8c8;transform:translateY(0.00px) scaleX(1.217)">08:00</div>
<div class="a" style="left:512.12px;top:289px;width:20px;text-align:center;font-size:4.5px;line-height:5.4px;color:#c8c8c8;transform:translateY(0.00px) scaleX(1.092)">10:00</div>
<div class="a" style="left:531.36px;top:289px;width:20px;text-align:center;font-size:4.5px;line-height:5.4px;color:#c8c8c8;transform:translateY(0.00px) scaleX(1.021)">12:00</div>
<div class="a" style="left:550.60px;top:289px;width:20px;text-align:center;font-size:4.5px;line-height:5.4px;color:#c8c8c8;transform:translateY(0.00px) scaleX(1.039)">14:00</div>
<div class="a" style="left:569.83px;top:289px;width:20px;text-align:center;font-size:4.5px;line-height:5.4px;color:#c8c8c8;transform:translateY(0.00px) scaleX(1.057)">16:00</div>
<div class="a" style="left:589.07px;top:289px;width:20px;text-align:center;font-size:4.5px;line-height:5.4px;color:#c8c8c8;transform:translateY(0.00px) scaleX(1.039)">18:00</div>
<div class="a" style="left:608.30px;top:289px;width:20px;text-align:center;font-size:4.5px;line-height:5.4px;color:#c8c8c8;transform:translateY(0.00px) scaleX(1.181)">20:00</div>
<div class="a" style="left:627.53px;top:289px;width:20px;text-align:center;font-size:4.5px;line-height:5.4px;color:#c8c8c8;transform:translateY(0.00px) scaleX(1.110)">22:00</div>
<div class="a" style="left:646.77px;top:289px;width:20px;text-align:center;font-size:4.5px;line-height:5.4px;color:#c8c8c8;transform:translateY(0.00px) scaleX(1.128)">24:00</div>
<div class="a " style="left:365px;top:309.00px;font-size:4.9px;line-height:5.88px;color:#d6d6d6;font-weight:normal;transform:translateY(0.26px) scaleX(1.177);transform-origin:0 50%;">Friday</div>
<svg style="left:398px;top:307.30px" width="17" height="8" viewBox="0 0 17 8"><rect x="0.7" y="0.15" width="15.4" height="7.7" rx="3.85" fill="#5fbf00"/><circle cx="12.75" cy="4" r="3.1" fill="#fff"/></svg>
<svg style="left:420px;top:303.35px" width="244" height="8" viewBox="420 -4 244 8"><rect x="422.80" y="-1.7" width="237.40" height="3.4" rx="1.7" fill="url(#tg)"/><rect x="444.99" y="-1.5" width="0.9" height="3" fill="#a9dc70"/><rect x="464.22" y="-1.5" width="0.9" height="3" fill="#a9dc70"/><rect x="483.45" y="-1.5" width="0.9" height="3" fill="#a9dc70"/><rect x="502.69" y="-1.5" width="0.9" height="3" fill="#a9dc70"/><rect x="521.92" y="-1.5" width="0.9" height="3" fill="#a9dc70"/><rect x="541.16" y="-1.5" width="0.9" height="3" fill="#a9dc70"/><rect x="560.39" y="-1.5" width="0.9" height="3" fill="#a9dc70"/><rect x="579.63" y="-1.5" width="0.9" height="3" fill="#a9dc70"/><rect x="598.87" y="-1.5" width="0.9" height="3" fill="#a9dc70"/><rect x="618.10" y="-1.5" width="0.9" height="3" fill="#a9dc70"/><rect x="637.33" y="-1.5" width="0.9" height="3" fill="#a9dc70"/><circle cx="424.9" cy="0" r="2.2" fill="#fff"/><circle cx="658.1" cy="0" r="2.2" fill="#fff"/></svg>
<div class="a" style="left:415.95px;top:313px;width:20px;text-align:center;font-size:4.5px;line-height:5.4px;color:#c8c8c8;transform:translateY(0.00px) scaleX(1.217)">00:00</div>
<div class="a" style="left:435.19px;top:313px;width:20px;text-align:center;font-size:4.5px;line-height:5.4px;color:#c8c8c8;transform:translateY(0.00px) scaleX(1.163)">02:00</div>
<div class="a" style="left:454.42px;top:313px;width:20px;text-align:center;font-size:4.5px;line-height:5.4px;color:#c8c8c8;transform:translateY(0.00px) scaleX(1.159)">04:00</div>
<div class="a" style="left:473.65px;top:313px;width:20px;text-align:center;font-size:4.5px;line-height:5.4px;color:#c8c8c8;transform:translateY(0.00px) scaleX(1.137)">06:00</div>
<div class="a" style="left:492.89px;top:313px;width:20px;text-align:center;font-size:4.5px;line-height:5.4px;color:#c8c8c8;transform:translateY(0.00px) scaleX(1.217)">08:00</div>
<div class="a" style="left:512.12px;top:313px;width:20px;text-align:center;font-size:4.5px;line-height:5.4px;color:#c8c8c8;transform:translateY(0.00px) scaleX(1.092)">10:00</div>
<div class="a" style="left:531.36px;top:313px;width:20px;text-align:center;font-size:4.5px;line-height:5.4px;color:#c8c8c8;transform:translateY(0.00px) scaleX(1.021)">12:00</div>
<div class="a" style="left:550.60px;top:313px;width:20px;text-align:center;font-size:4.5px;line-height:5.4px;color:#c8c8c8;transform:translateY(0.00px) scaleX(1.039)">14:00</div>
<div class="a" style="left:569.83px;top:313px;width:20px;text-align:center;font-size:4.5px;line-height:5.4px;color:#c8c8c8;transform:translateY(0.00px) scaleX(1.057)">16:00</div>
<div class="a" style="left:589.07px;top:313px;width:20px;text-align:center;font-size:4.5px;line-height:5.4px;color:#c8c8c8;transform:translateY(0.00px) scaleX(1.039)">18:00</div>
<div class="a" style="left:608.30px;top:313px;width:20px;text-align:center;font-size:4.5px;line-height:5.4px;color:#c8c8c8;transform:translateY(0.00px) scaleX(1.181)">20:00</div>
<div class="a" style="left:627.53px;top:313px;width:20px;text-align:center;font-size:4.5px;line-height:5.4px;color:#c8c8c8;transform:translateY(0.00px) scaleX(1.110)">22:00</div>
<div class="a" style="left:646.77px;top:313px;width:20px;text-align:center;font-size:4.5px;line-height:5.4px;color:#c8c8c8;transform:translateY(0.00px) scaleX(1.128)">24:00</div>
<div class="a " style="left:365px;top:333.00px;font-size:4.9px;line-height:5.88px;color:#d6d6d6;font-weight:normal;transform:translateY(0.26px) scaleX(1.200);transform-origin:0 50%;">Saturday</div>
<svg style="left:398px;top:331.30px" width="17" height="8" viewBox="0 0 17 8"><rect x="0.7" y="0.15" width="15.4" height="7.7" rx="3.85" fill="#5fbf00"/><circle cx="12.75" cy="4" r="3.1" fill="#fff"/></svg>
<svg style="left:420px;top:327.35px" width="244" height="8" viewBox="420 -4 244 8"><rect x="422.80" y="-1.7" width="237.40" height="3.4" rx="1.7" fill="url(#tg)"/><rect x="444.99" y="-1.5" width="0.9" height="3" fill="#a9dc70"/><rect x="464.22" y="-1.5" width="0.9" height="3" fill="#a9dc70"/><rect x="483.45" y="-1.5" width="0.9" height="3" fill="#a9dc70"/><rect x="502.69" y="-1.5" width="0.9" height="3" fill="#a9dc70"/><rect x="521.92" y="-1.5" width="0.9" height="3" fill="#a9dc70"/><rect x="541.16" y="-1.5" width="0.9" height="3" fill="#a9dc70"/><rect x="560.39" y="-1.5" width="0.9" height="3" fill="#a9dc70"/><rect x="579.63" y="-1.5" width="0.9" height="3" fill="#a9dc70"/><rect x="598.87" y="-1.5" width="0.9" height="3" fill="#a9dc70"/><rect x="618.10" y="-1.5" width="0.9" height="3" fill="#a9dc70"/><rect x="637.33" y="-1.5" width="0.9" height="3" fill="#a9dc70"/><circle cx="424.9" cy="0" r="2.2" fill="#fff"/><circle cx="658.1" cy="0" r="2.2" fill="#fff"/></svg>
<div class="a" style="left:415.95px;top:337px;width:20px;text-align:center;font-size:4.5px;line-height:5.4px;color:#c8c8c8;transform:translateY(0.00px) scaleX(1.217)">00:00</div>
<div class="a" style="left:435.19px;top:337px;width:20px;text-align:center;font-size:4.5px;line-height:5.4px;color:#c8c8c8;transform:translateY(0.00px) scaleX(1.163)">02:00</div>
<div class="a" style="left:454.42px;top:337px;width:20px;text-align:center;font-size:4.5px;line-height:5.4px;color:#c8c8c8;transform:translateY(0.00px) scaleX(1.159)">04:00</div>
<div class="a" style="left:473.65px;top:337px;width:20px;text-align:center;font-size:4.5px;line-height:5.4px;color:#c8c8c8;transform:translateY(0.00px) scaleX(1.137)">06:00</div>
<div class="a" style="left:492.89px;top:337px;width:20px;text-align:center;font-size:4.5px;line-height:5.4px;color:#c8c8c8;transform:translateY(0.00px) scaleX(1.217)">08:00</div>
<div class="a" style="left:512.12px;top:337px;width:20px;text-align:center;font-size:4.5px;line-height:5.4px;color:#c8c8c8;transform:translateY(0.00px) scaleX(1.092)">10:00</div>
<div class="a" style="left:531.36px;top:337px;width:20px;text-align:center;font-size:4.5px;line-height:5.4px;color:#c8c8c8;transform:translateY(0.00px) scaleX(1.021)">12:00</div>
<div class="a" style="left:550.60px;top:337px;width:20px;text-align:center;font-size:4.5px;line-height:5.4px;color:#c8c8c8;transform:translateY(0.00px) scaleX(1.039)">14:00</div>
<div class="a" style="left:569.83px;top:337px;width:20px;text-align:center;font-size:4.5px;line-height:5.4px;color:#c8c8c8;transform:translateY(0.00px) scaleX(1.057)">16:00</div>
<div class="a" style="left:589.07px;top:337px;width:20px;text-align:center;font-size:4.5px;line-height:5.4px;color:#c8c8c8;transform:translateY(0.00px) scaleX(1.039)">18:00</div>
<div class="a" style="left:608.30px;top:337px;width:20px;text-align:center;font-size:4.5px;line-height:5.4px;color:#c8c8c8;transform:translateY(0.00px) scaleX(1.181)">20:00</div>
<div class="a" style="left:627.53px;top:337px;width:20px;text-align:center;font-size:4.5px;line-height:5.4px;color:#c8c8c8;transform:translateY(0.00px) scaleX(1.110)">22:00</div>
<div class="a" style="left:646.77px;top:337px;width:20px;text-align:center;font-size:4.5px;line-height:5.4px;color:#c8c8c8;transform:translateY(0.00px) scaleX(1.128)">24:00</div>
<div class="a" style="left:632px;top:377.7px;width:21px;height:11.4px;background:#898989;border-radius:1px"></div>
<div class="a " style="left:635.2px;top:380.00px;font-size:4.9px;line-height:5.88px;color:#f2f2f2;font-weight:bold;transform:translateY(0.56px) scaleX(1.043);transform-origin:0 50%;">Close</div>
<div class="a" style="left:654.8px;top:377.7px;width:17.3px;height:11.4px;background:#3da000;border-radius:1px"></div>
<div class="a " style="left:658.2px;top:380.00px;font-size:4.9px;line-height:5.88px;color:#f2f2f2;font-weight:bold;transform:translateY(0.56px) scaleX(1.082);transform-origin:0 50%;">Add</div>
<!-- footer -->
<div class="a " style="left:432.7px;top:479.00px;font-size:4.9px;line-height:5.88px;color:#9a9a9a;font-weight:normal;transform:translateY(0.86px) scaleX(1.157);transform-origin:0 50%;">Last login:</div>
<div class="a " style="left:462px;top:479.00px;font-size:4.9px;line-height:5.88px;color:#0b6c9c;font-weight:normal;transform:translateY(0.86px) scaleX(1.126);transform-origin:0 50%;">1 minutes ago</div>
<div class="a " style="left:500.1px;top:479.00px;font-size:4.9px;line-height:5.88px;color:#9a9a9a;font-weight:normal;transform:translateY(0.86px) scaleX(1.130);transform-origin:0 50%;">from 92.236.2.98 (United Kingdom, Blackpool)</div>
<div class="a " style="left:392.6px;top:488.00px;font-size:4.9px;line-height:5.88px;color:#9a9a9a;font-weight:normal;transform:translateY(0.16px) scaleX(1.137);transform-origin:0 50%;">Copyright © 2024 Zyxel and/or its affiliates. All Rights Reserved. | Version: 18.00 (build 2405070207, prod)</div>
<div class="a " style="left:486px;top:497.00px;font-size:4.9px;line-height:5.88px;color:#0b6c9c;font-weight:normal;transform:translateY(0.06px) scaleX(1.100);transform-origin:0 50%;">Terms of Use</div>
<div class="a " style="left:521.4px;top:497.00px;font-size:4.9px;line-height:5.88px;color:#9a9a9a;font-weight:normal;transform:translateY(0.06px) scaleX(1.000);transform-origin:0 50%;">|</div>
<div class="a " style="left:525.6px;top:497.00px;font-size:4.9px;line-height:5.88px;color:#0b6c9c;font-weight:normal;transform:translateY(0.06px) scaleX(1.156);transform-origin:0 50%;">Privacy Policy</div>
<div class="a" style="left:992px;top:475.3px;width:24.2px;height:24.4px;background:#62bd00;border-radius:12.2px 3px 12.2px 12.2px"></div>
<svg style="left:999.5px;top:484px" width="9.5" height="7" viewBox="0 0 9.5 7"><rect x="0.3" y="0.3" width="8.9" height="6.2" rx="1.4" fill="#fff"/><path d="M1.6 2.5 L7.4 2.5 M1.6 4.3 L5 4.3" stroke="#62bd00" stroke-width="0.8"/></svg>
</div>
</body>
</html>
